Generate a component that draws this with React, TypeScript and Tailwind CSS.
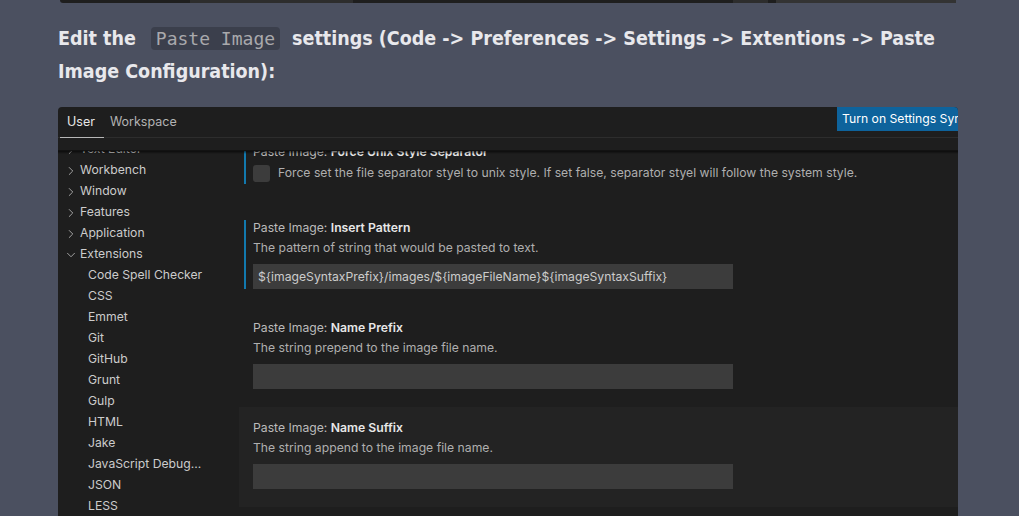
import { ChevronRight, ChevronDown } from "lucide-react";

// Blog page: paragraph with inline code, then a screenshot of the VS Code settings editor.

const sans = "font-['Inter','Liberation_Sans',sans-serif]";

type NavItem = { label: string; depth: 0 | 1; open?: boolean };

const nav: NavItem[] = [
  { label: "Text Editor", depth: 0 },
  { label: "Workbench", depth: 0 },
  { label: "Window", depth: 0 },
  { label: "Features", depth: 0 },
  { label: "Application", depth: 0 },
  { label: "Extensions", depth: 0, open: true },
  { label: "Code Spell Checker", depth: 1 },
  { label: "CSS", depth: 1 },
  { label: "Emmet", depth: 1 },
  { label: "Git", depth: 1 },
  { label: "GitHub", depth: 1 },
  { label: "Grunt", depth: 1 },
  { label: "Gulp", depth: 1 },
  { label: "HTML", depth: 1 },
  { label: "Jake", depth: 1 },
  { label: "JavaScript Debug...", depth: 1 },
  { label: "JSON", depth: 1 },
  { label: "LESS", depth: 1 },
];

function Title({ name }: { name: string }) {
  return (
    <div className="h-4 leading-4 text-[12.2px] text-[#bbbbbb] whitespace-nowrap">
      Paste Image: <span className="font-semibold text-[#e8e8e8]">{name}</span>
    </div>
  );
}

function TextSetting({
  name,
  desc,
  value,
  focused,
  hovered,
}: {
  name: string;
  desc: string;
  value?: string;
  focused?: boolean;
  hovered?: boolean;
}) {
  return (
    <div className={`pt-[13px] pb-[18px] pl-[5px] ${hovered ? "bg-[#232323]" : ""}`}>
      <div className={`border-l-2 pl-[7px] ${focused ? "border-[#1279ae]" : "border-transparent"}`}>
        <Title name={name} />
        <div className="mt-[4px] h-4 leading-4 text-[12.2px] text-[#afafaf]">{desc}</div>
        <div className="mt-[8px] h-[25px] w-[480px] bg-[#3c3c3c] px-[5px] leading-[25px] text-[12.2px] text-[#cccccc] whitespace-nowrap">
          {value}
        </div>
      </div>
    </div>
  );
}

export default function App() {
  return (
    <div className="w-[1019px] h-[516px] overflow-hidden bg-[#4b5060]">
      {/* bottom edge of previous screenshot */}
      <div className="ml-[60px] w-[896px] h-[3px] rounded-b bg-[#1e1e1e] flex">
        <div className="ml-[130px] w-[190px] bg-[#2d2d2d]" />
        <div className="ml-[380px] w-[40px] bg-[#2d2d2d]" />
        <div className="ml-[8px] w-[210px] bg-[#333333]" />
      </div>

      <p className="mt-[19px] px-[58px] text-[19.5px] leading-[33px] font-bold text-[#e8e8ec] font-['DejaVu_Sans_Condensed','Liberation_Sans_Narrow',sans-serif]">
        Edit the
        <code className="ml-[15px] mr-[12px] rounded bg-[#3b3f4c] px-[5px] py-[1px] font-['DejaVu_Sans_Mono','Liberation_Mono',monospace] text-[18px] font-normal text-[#a9a9ac]">
          Paste Image
        </code>
        settings (Code -&gt; Preferences -&gt; Settings -&gt; Extentions -&gt; Paste
        <br />
        Image Configuration):
      </p>

      <div className={`ml-[58px] w-[900px] mt-[19px] h-[420px] overflow-hidden rounded-t bg-[#1e1e1e] ${sans}`}>
        {/* tabs */}
        <div className="flex h-[31px] border-b border-[#2d2d2d]">
          <div className="relative px-[9px] pt-[6px] text-[12.5px] text-[#e7e7e7]">
            User
            <div className="absolute left-[2px] right-0 bottom-[-1px] h-px bg-[#b8b8b8]" />
          </div>
          <div className="px-[6px] pt-[6px] text-[12.5px] text-[#b3b3b3]">Workspace</div>
          <div className="ml-auto h-6 w-[121px] overflow-hidden whitespace-nowrap bg-[#0e639c] pl-[5px] leading-6 text-[12.2px] text-white">
            Turn on Settings Sync
          </div>
        </div>
        <div className="h-[12px]" />
        <div className="h-px bg-[#121212]" />

        <div className="relative flex h-[370px] overflow-hidden">
          <div className="pointer-events-none absolute inset-x-0 top-0 h-[3px] bg-gradient-to-b from-[#000000]/60 to-transparent" />

          {/* sidebar */}
          <div className="w-[181px] shrink-0 -mt-[12px]">
            {nav.map((n) => (
              <div
                key={n.label}
                className={`flex h-[21px] items-center text-[12.2px] text-[#cccccc] ${n.depth ? "pl-[30px]" : "pl-[6px]"}`}
              >
                {n.depth === 0 &&
                  (n.open ? (
                    <ChevronDown className="mr-[2px] h-[14px] w-[14px] text-[#bdbdbd]" strokeWidth={1.4} />
                  ) : (
                    <ChevronRight className="mr-[2px] h-[14px] w-[14px] text-[#bdbdbd]" strokeWidth={1.4} />
                  ))}
                <span className="whitespace-nowrap">{n.label}</span>
              </div>
            ))}
          </div>

          {/* settings list */}
          <div className="flex-1 -mt-[20px]">
            <div className="pt-[13px] pb-[23px] pl-[5px]">
              <div className="border-l-2 border-[#1279ae] pl-[7px] pb-[2px]">
                <Title name="Force Unix Style Separator" />
                <div className="mt-[4px] flex items-center">
                  <div className="h-[17px] w-[17px] rounded-[3px] bg-[#3c3c3c]" />
                  <span className="ml-[8px] whitespace-nowrap text-[12.2px] text-[#afafaf]">
                    Force set the file separator styel to unix style. If set false, separator styel will follow the system style.
                  </span>
                </div>
              </div>
            </div>
            <TextSetting
              name="Insert Pattern"
              desc="The pattern of string that would be pasted to text."
              value="${imageSyntaxPrefix}/images/${imageFileName}${imageSyntaxSuffix}"
              focused
            />
            <TextSetting name="Name Prefix" desc="The string prepend to the image file name." />
            <TextSetting name="Name Suffix" desc="The string append to the image file name." hovered />
          </div>
        </div>
      </div>
    </div>
  );
}
